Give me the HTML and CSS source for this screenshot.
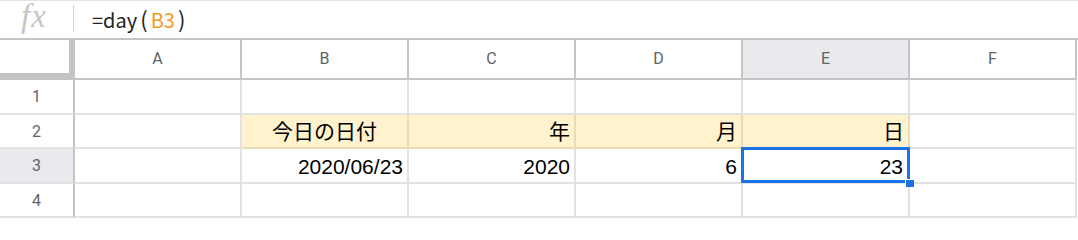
FILE: index.html
```html
<!DOCTYPE html>
<html lang="ja">
<head>
<meta charset="utf-8">
<title>Sheet</title>
<link rel="stylesheet" href="styles.css">
</head>
<body>
<div class="formula-bar">
  <div class="fx">fx</div>
  <div class="divider"></div>
  <div class="formula">=day<span class="paren">(</span><span class="ref">B3</span><span class="paren">)</span></div>
</div>
<div class="sheet">
  <div class="corner"></div>
  <div class="colhead">A</div>
  <div class="colhead">B</div>
  <div class="colhead">C</div>
  <div class="colhead">D</div>
  <div class="colhead sel">E</div>
  <div class="colhead">F</div>

  <div class="rowhead">1</div>
  <div class="cell"></div><div class="cell"></div><div class="cell"></div><div class="cell"></div><div class="cell"></div><div class="cell"></div>

  <div class="rowhead">2</div>
  <div class="cell"></div>
  <div class="cell fill center">今日の日付</div>
  <div class="cell fill">年</div>
  <div class="cell fill">月</div>
  <div class="cell fill">日</div>
  <div class="cell"></div>

  <div class="rowhead sel">3</div>
  <div class="cell"></div>
  <div class="cell">2020/06/23</div>
  <div class="cell">2020</div>
  <div class="cell">6</div>
  <div class="cell active">23<span class="selbox"></span><span class="handle"></span></div>
  <div class="cell"></div>

  <div class="rowhead">4</div>
  <div class="cell"></div><div class="cell"></div><div class="cell"></div><div class="cell"></div><div class="cell"></div><div class="cell"></div>
</div>
</body>
</html>
```
FILE: styles.css
```css
* { box-sizing: border-box; }
html, body { margin: 0; padding: 0; background: #fff; }
body { width: 1078px; height: 220px; overflow: hidden; font-family: "Liberation Sans", "Noto Sans CJK JP", sans-serif; }

.formula-bar {
  height: 40px;
  border-top: 1px solid #e3e3e3;
  border-bottom: 2px solid #c4c4c4;
  display: flex;
  align-items: center;
}
.fx {
  width: 73px;
  padding-left: 21px;
  font-family: "Liberation Serif", serif;
  font-style: italic;
  font-size: 33px;
  color: #c6c6c6;
  line-height: 1;
  margin-top: -6px;
  letter-spacing: 1px;
}
.divider {
  width: 1px;
  height: 27px;
  background: #d4d4d4;
  margin-top: -2px;
}
.formula {
  padding-left: 18px;
  font-family: "Noto Sans CJK JP", "Noto Sans", sans-serif;
  font-size: 20px;
  color: #222;
  margin-top: -4px;
}
.paren { margin: 0 3px; font-size: 22px; }
.ref { color: #f29c1f; }

.sheet {
  display: grid;
  grid-template-columns: 75px repeat(6, 167px);
  grid-template-rows: 40px 35px 34px 35px 34px;
}
.corner {
  border-right: 6px solid #c4c4c4;
  border-bottom: 7px solid #c4c4c4;
}
.colhead {
  border-right: 2px solid #c4c4c4;
  border-bottom: 2px solid #c4c4c4;
  display: flex;
  align-items: center;
  justify-content: center;
  font-family: Roboto, "Liberation Sans", sans-serif;
  font-size: 16px;
  color: #5f6368;
  padding-bottom: 1px;
}
.colhead.sel, .rowhead.sel { background: #e8eaed; }
.rowhead {
  border-right: 2px solid #c4c4c4;
  border-bottom: 2px solid #e2e2e2;
  display: flex;
  align-items: center;
  justify-content: center;
  font-family: Roboto, "Liberation Sans", sans-serif;
  font-size: 16px;
  color: #5f6368;
}
.cell {
  border-right: 2px solid #e2e2e2;
  border-bottom: 2px solid #e2e2e2;
  display: flex;
  align-items: flex-end;
  justify-content: flex-end;
  padding: 0 4px 3px 4px;
  font-size: 21px;
  color: #000;
  line-height: 1.2;
  position: relative;
}
.cell.center { justify-content: center; }
.cell.fill {
  background: #fff2cc;
  border-color: #eadcb4;
}
.cell.active { padding-right: 5px; z-index: 2; }
.selbox {
  position: absolute;
  left: -2px;
  top: -2px;
  right: -2px;
  bottom: -1px;
  border: 3px solid #1a73e8;
  pointer-events: none;
}
.handle {
  position: absolute;
  right: -6px;
  bottom: -5px;
  width: 9px;
  height: 8px;
  background: #1a73e8;
  border: 1px solid #fff;
  border-right: 0;
  border-bottom: 0;
}
```
